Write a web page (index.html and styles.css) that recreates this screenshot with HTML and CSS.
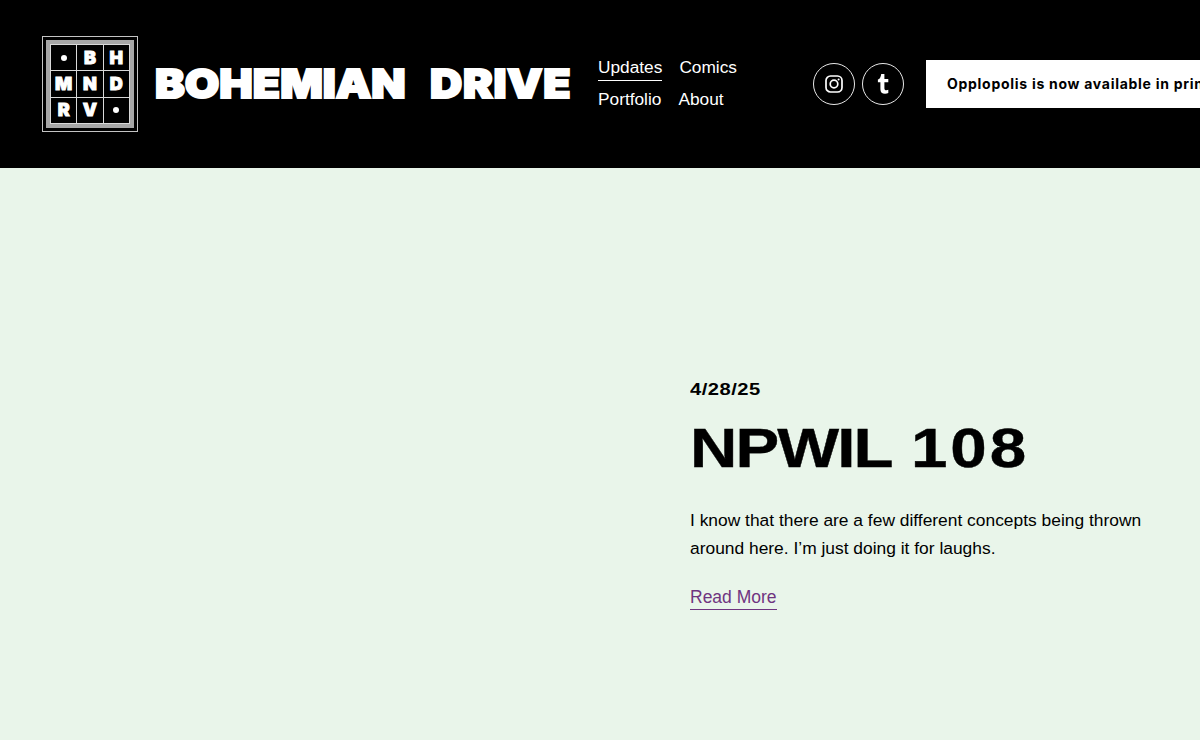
FILE: index.html
```html
<!DOCTYPE html>
<html lang="en">
<head>
<meta charset="utf-8">
<title>Bohemian Drive</title>
<link rel="stylesheet" href="styles.css">
</head>
<body>
<header class="header">
  <a class="logo" href="#">
    <span class="logo-band">
      <span class="logo-grid">
        <span class="cell"><i class="dot"></i></span><span class="cell">B</span><span class="cell">H</span>
        <span class="cell">M</span><span class="cell">N</span><span class="cell">D</span>
        <span class="cell">R</span><span class="cell">V</span><span class="cell"><i class="dot"></i></span>
      </span>
    </span>
  </a>
  <div class="brand-box"><span class="brand">BOHEMIAN <span class="brand-last">DRIVE</span></span></div>
  <nav class="nav">
    <div class="nav-row"><a class="nav-link active" href="#">Updates</a><a class="nav-link" href="#">Comics</a></div>
    <div class="nav-row"><a class="nav-link" href="#">Portfolio</a><a class="nav-link" href="#">About</a></div>
  </nav>
  <div class="socials">
    <a class="social" href="#" aria-label="Instagram">
      <svg width="18" height="18" viewBox="0 0 18 18" fill="none" stroke="#fff" stroke-width="1.7"><rect x="1" y="1" width="16" height="16" rx="4.5"/><circle cx="9" cy="9" r="3.8"/><circle cx="13.6" cy="4.4" r="1" fill="#fff" stroke="none"/></svg>
    </a>
    <a class="social" href="#" aria-label="Tumblr">
      <svg width="12" height="20" viewBox="0 0 12 20" fill="#fff"><path d="M4.2 0h3.2v4.9h3.9v3.3H7.4v6c0 1.500.7 2.100 1.900 2.100.7 0 1.400-.2 2-.5V19c-.9.5-2 .8-3.300.8-3 0-4.600-1.700-4.600-4.600V8.200H.9V5.600C2.800 5 3.900 3 4.200 0z"/></svg>
    </a>
  </div>
  <a class="promo" href="#">Opplopolis is now available in print!</a>
</header>
<main class="main">
  <article class="post">
    <div class="date">4/28/25</div>
    <div class="title-box"><h1 class="title">NPWIL <span class="title-num">108</span></h1></div>
    <p class="excerpt">I know that there are a few different concepts being thrown around here. I’m just doing it for laughs.</p>
    <a class="more" href="#">Read More</a>
  </article>
</main>
</body>
</html>
```
FILE: styles.css
```css
html, body { margin: 0; padding: 0; height: 740px; overflow: hidden; }
body { background: #e9f5ea; font-family: "Liberation Sans", Arial, sans-serif; color: #000; }
a { text-decoration: none; color: inherit; }

.header { height: 168px; background: #000; display: flex; align-items: center; padding-left: 42px; box-sizing: border-box; overflow: hidden; color: #fff; }

.logo { flex: none; width: 96px; height: 96px; box-sizing: border-box; border: 1.5px solid #c4c4c4; padding: 3px; display: block; }
.logo-band { display: block; width: 100%; height: 100%; box-sizing: border-box; border: 4px solid #a6a6a6; }
.logo-grid { display: grid; grid-template-columns: repeat(3, 1fr); grid-template-rows: repeat(3, 1fr); gap: 1px; width: 100%; height: 100%; background: #d8d8d8; padding: 1px; box-sizing: border-box; }
.cell { background: #000; display: flex; align-items: center; justify-content: center; font-family: Inter, sans-serif; font-weight: 900; font-size: 18px; line-height: 1; color: #fff; -webkit-text-stroke: .9px #fff; }
.dot { width: 6px; height: 6px; border-radius: 50%; background: #fff; }

.brand-box { flex: none; width: 417px; margin-left: 17px; height: 40px; }
.brand { display: inline-block; font-family: Inter, sans-serif; font-weight: 900; font-size: 40px; line-height: 40px; white-space: nowrap; word-spacing: 14px; transform: scaleX(1.115); transform-origin: left center; -webkit-text-stroke: 2px #fff; }
.brand-last { letter-spacing: .6px; }

.nav { flex: none; width: 215px; margin: -2px 0 0 26px; font-size: 17.3px; display: flex; flex-direction: column; gap: 8px; }
.nav-row { display: flex; gap: 17px; height: 24px; line-height: 24px; align-items: flex-start; }
.nav-link { display: block; height: 24px; }
.active { height: 25px; border-bottom: 1px solid #fff; }

.socials { flex: none; display: flex; gap: 7px; }
.social { width: 42px; height: 42px; box-sizing: border-box; border: 1px solid #e8e8e8; border-radius: 50%; display: flex; align-items: center; justify-content: center; }

.promo { flex: none; margin-left: 22px; height: 48px; box-sizing: border-box; padding: 0 21px 2px; background: #fff; color: #000; display: flex; align-items: center; font-family: Inter, sans-serif; font-weight: 700; font-size: 14px; letter-spacing: .72px; white-space: nowrap; }

.main { display: flex; padding: 212px 0 0 690px; }
.post { width: 470px; }
.date { font-weight: 700; font-size: 16px; line-height: 20px; letter-spacing: .4px; transform: scaleX(1.26); transform-origin: left center; }
.title-box { margin-top: 18px; height: 60px; }
.title { margin: 0; display: inline-block; font-size: 56px; line-height: 60px; font-weight: 700; white-space: nowrap; letter-spacing: -1.6px; word-spacing: 3.5px; transform: scaleX(1.17); transform-origin: left center; -webkit-text-stroke: .4px #000; }
.title-num { letter-spacing: 2.5px; }
.excerpt { margin: 28px 0 0; font-size: 17.4px; line-height: 28px; }
.more { display: inline-block; margin-top: 24px; font-size: 17.5px; line-height: 23px; color: #6f3480; border-bottom: 1px solid #6f3480; }
```
